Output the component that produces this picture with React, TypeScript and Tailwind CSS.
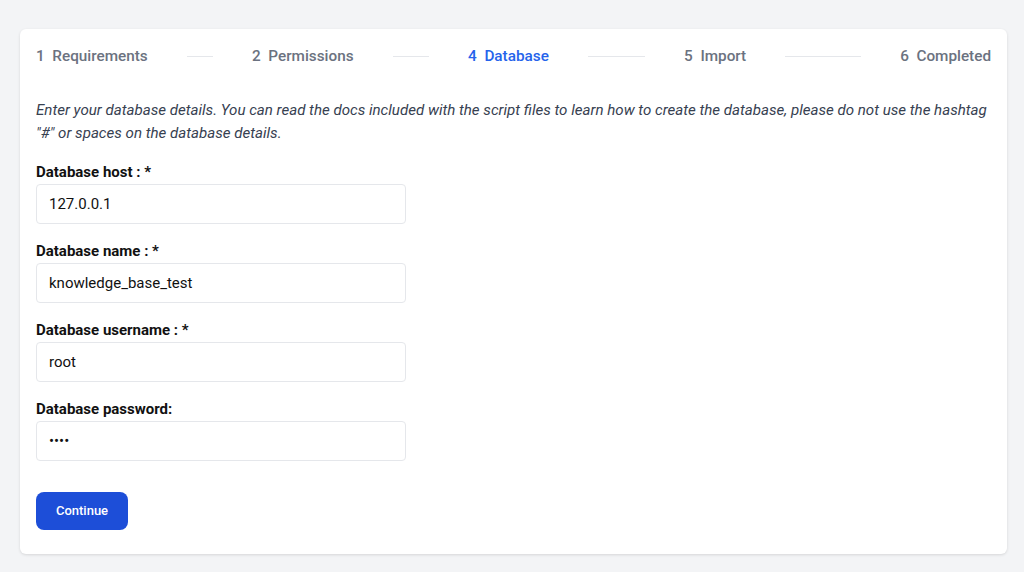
const steps = [
  { n: 1, label: "Requirements" },
  { n: 2, label: "Permissions" },
  { n: 4, label: "Database", active: true },
  { n: 5, label: "Import" },
];

const fields = [
  { label: "Database host : *", value: "127.0.0.1", type: "text" },
  { label: "Database name : *", value: "knowledge_base_test", type: "text" },
  { label: "Database username : *", value: "root", type: "text" },
  { label: "Database password:", value: "root", type: "password" },
];

const App = () => {
  return (
    <div className="min-h-[572px] bg-[#f3f4f6] pl-5 pr-[17px] pt-[29px] font-['Roboto',sans-serif]">
      <div className="rounded-md bg-white px-4 pb-6 pt-[16px] shadow-[0_1px_3px_rgba(0,0,0,0.12)]">
        {/* Steps */}
        <div className="flex items-center text-[15.3px] font-medium leading-[22px]">
          {steps.map((s) => (
            <div key={s.n} className="flex flex-1 items-center">
              <span className={s.active ? "text-[#2563eb]" : "text-[#6b7280]"}>
                {s.n}&nbsp;&nbsp;{s.label}
              </span>
              <div className="mx-[39px] h-px flex-1 bg-[#e5e7eb]" />
            </div>
          ))}
          <span className="text-[#6b7280]">6&nbsp;&nbsp;Completed</span>
        </div>

        <p className="mt-[32px] text-[15.1px] italic leading-[23px] text-[#374151]">
          Enter your database details. You can read the docs included with the script files to learn how to create the database, please do not use the hashtag "#" or spaces on the database details.
        </p>

        <form className="mt-[16px] flex flex-col gap-[16px]">
          {fields.map((f) => (
            <div key={f.label}>
              <label className="block text-[15px] font-bold leading-[22px] text-[#111]">
                {f.label}
              </label>
              <input
                type={f.type}
                defaultValue={f.value}
                readOnly
                className="mt-[1px] h-10 w-[370px] rounded border border-[#e5e7eb] px-3 text-[15px] text-[#111] outline-none"
              />
            </div>
          ))}

          <div className="pt-[15px]">
            <button
              type="button"
              className="h-[38px] w-[92px] rounded-lg bg-[#1d4ed8] text-[13px] font-medium text-white"
            >
              Continue
            </button>
          </div>
        </form>
      </div>
    </div>
  );
};

export default App;
